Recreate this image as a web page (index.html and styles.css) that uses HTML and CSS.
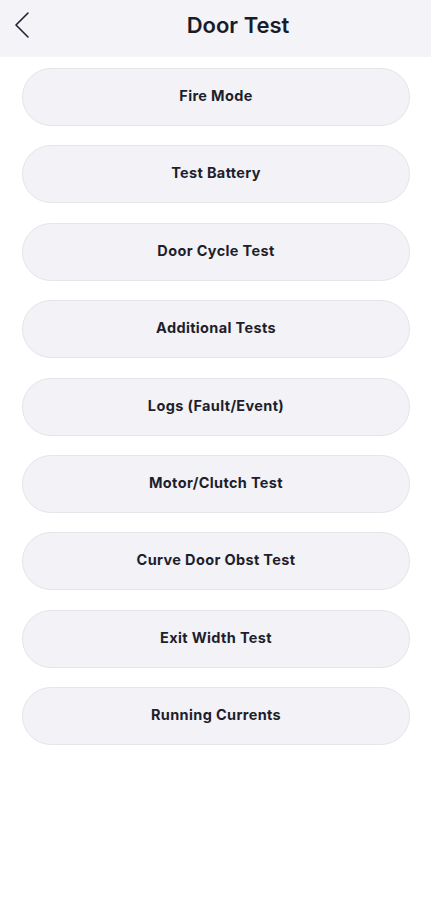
FILE: index.html
```html
<!DOCTYPE html>
<html>
<head>
<meta charset="utf-8">
<link rel="stylesheet" href="styles.css">
</head>
<body>
<header class="topbar">
  <button class="back" aria-label="Back">
    <svg width="16" height="28" viewBox="0 0 16 28"><path d="M14 2 L2 14 L14 26" fill="none" stroke="#222230" stroke-width="1.6" stroke-linecap="round" stroke-linejoin="round"/></svg>
  </button>
  <h1 class="title">Door Test</h1>
</header>
<main class="list">
  <button class="item">Fire Mode</button>
  <button class="item">Test Battery</button>
  <button class="item">Door Cycle Test</button>
  <button class="item">Additional Tests</button>
  <button class="item">Logs (Fault/Event)</button>
  <button class="item">Motor/Clutch Test</button>
  <button class="item">Curve Door Obst Test</button>
  <button class="item">Exit Width Test</button>
  <button class="item">Running Currents</button>
</main>
</body>
</html>
```
FILE: styles.css
```css
* { box-sizing: border-box; }
html, body { margin: 0; padding: 0; background: #ffffff; }
body { font-family: Inter, Roboto, "Noto Sans", sans-serif; width: 431px; }
.topbar {
  height: 57px;
  background: #f3f3f8;
  display: flex;
  align-items: center;
  justify-content: center;
  position: relative;
}
.back {
  position: absolute;
  left: 14px;
  top: 10px;
  background: none;
  border: 0;
  padding: 0;
  width: 18px;
  height: 30px;
  display: flex;
  align-items: center;
}
.title {
  margin: 0 0 8px 45px;
  font-family: Inter, Roboto, sans-serif;
  font-size: 22px;
  font-weight: 600;
  color: #1b1b28;
}
.list {
  display: flex;
  flex-direction: column;
  gap: 19.4px;
  padding: 11px 21px 0 22px;
}
.item {
  height: 58px;
  width: 100%;
  border-radius: 29px;
  background: #f2f2f7;
  border: 1px solid #e4e4ea;
  font-family: Inter, Roboto, "Noto Sans", sans-serif;
  font-size: 14.5px;
  font-weight: 700;
  color: #1e1e2c;
  padding: 0 0 3px 0;
  letter-spacing: 0.35px;
}
```
